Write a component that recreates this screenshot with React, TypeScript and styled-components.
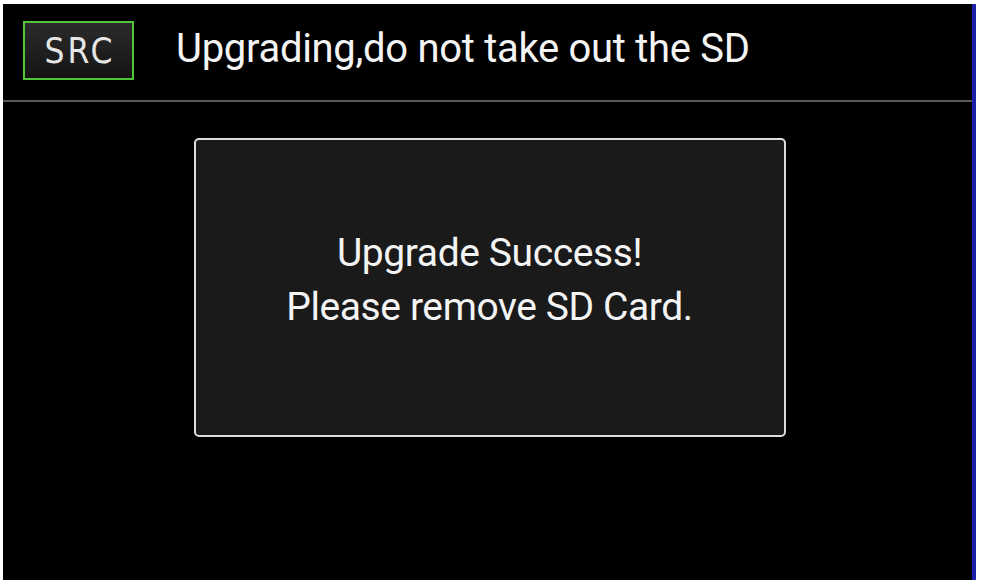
import React from 'react';
import styled, { createGlobalStyle } from 'styled-components';

const GlobalStyle = createGlobalStyle`
  html, body {
    margin: 0;
    padding: 0;
    background: #ffffff;
  }
  body {
    width: 982px;
    height: 588px;
    overflow: hidden;
  }
`;

const Frame = styled.div`
  width: 982px;
  height: 588px;
  padding: 4px 6px 8px 3px;
  box-sizing: border-box;
  display: flex;
`;

const Screen = styled.div`
  flex: 1;
  display: flex;
  flex-direction: column;
  background: #000;
  border-right: 4px solid #1a20a8;
  font-family: Roboto, "Liberation Sans", sans-serif;
  color: #f4f4f4;
`;

const Header = styled.div`
  height: 98px;
  display: flex;
  align-items: center;
  gap: 42px;
  padding-left: 20px;
  border-bottom: 2px solid #5a5a5a;
  box-sizing: border-box;
  padding-bottom: 3px;
`;

const SourceBadge = styled.div`
  width: 111px;
  height: 59px;
  box-sizing: border-box;
  border: 2px solid #52c43c;
  background: linear-gradient(180deg, #2b2b2b 0%, #141414 100%);
  display: flex;
  align-items: center;
  justify-content: center;
  font-family: "DejaVu Sans Condensed", "DejaVu Sans", sans-serif;
  font-size: 35px;
  letter-spacing: 3px;
  color: #e6e6e6;
  padding-left: 3px;
`;

const Title = styled.div`
  font-size: 40px;
  letter-spacing: -0.3px;
  line-height: 1;
  margin-top: -4px;
`;

const Body = styled.div`
  flex: 1;
  display: flex;
  justify-content: center;
  padding-top: 36px;
`;

const Dialog = styled.div`
  width: 592px;
  height: 299px;
  box-sizing: border-box;
  margin-left: 4px;
  border: 2px solid #dcdcdc;
  border-radius: 5px;
  background: #1a1a1a;
  display: flex;
  flex-direction: column;
  align-items: center;
  justify-content: center;
  font-size: 39px;
  letter-spacing: -0.4px;
  line-height: 54px;
  text-align: center;
  padding-bottom: 16px;
`;

const App: React.FC = () => {
  return (
    <>
      <GlobalStyle />
      <Frame>
        <Screen>
          <Header>
            <SourceBadge>SRC</SourceBadge>
            <Title>Upgrading,do not take out the SD</Title>
          </Header>
          <Body>
            <Dialog>
              <div>Upgrade Success!</div>
              <div>Please remove SD Card.</div>
            </Dialog>
          </Body>
        </Screen>
      </Frame>
    </>
  );
};

export default App;
